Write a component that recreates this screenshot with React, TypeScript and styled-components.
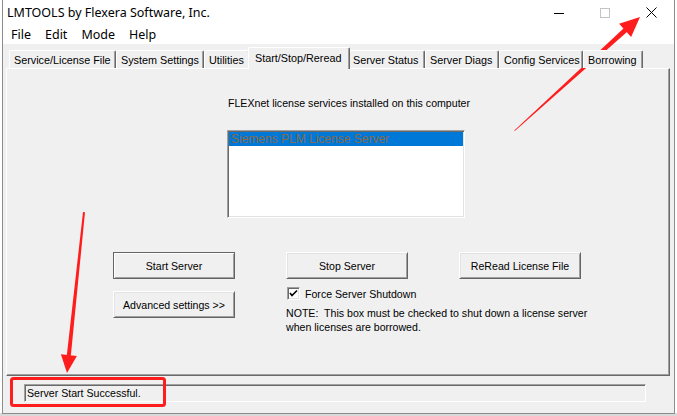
import React from 'react';
import styled, { createGlobalStyle } from 'styled-components';

const GlobalStyle = createGlobalStyle`
  html, body {
    margin: 0;
    padding: 0;
    width: 677px;
    height: 416px;
    overflow: hidden;
    background: #ffffff;
  }
`;

const UI_FONT = `'Liberation Sans', Arial, sans-serif`;
const TITLE_FONT = `'Noto Sans', 'Liberation Sans', sans-serif`;

const Desktop = styled.div`
  width: 677px;
  height: 416px;
  display: flex;
  align-items: flex-start;
  background: linear-gradient(to bottom, #ffffff 0, #ffffff 413px, #d9d9d9 413px);
  position: relative;
`;

const Window = styled.div`
  box-sizing: border-box;
  margin-left: 2px;
  width: 673px;
  height: 414px;
  border: 1px solid #8c8c8c;
  border-top: none;
  display: flex;
  flex-direction: column;
  background: #f0f0f0;
`;

const TitleBar = styled.div`
  height: 22px;
  display: flex;
  align-items: center;
  background: #ffffff;
  padding-top: 3px;
  box-sizing: border-box;
`;

const Title = styled.div`
  flex: 1;
  padding-left: 4px;
  font-family: ${TITLE_FONT};
  font-size: 12.5px;
  color: #000;
`;

const CaptionButton = styled.div`
  width: 46px;
  height: 19px;
  display: flex;
  align-items: center;
  justify-content: center;
`;

const MenuBar = styled.div`
  height: 22px;
  box-sizing: border-box;
  display: flex;
  align-items: center;
  padding: 3px 0 0 2px;
  background: #ffffff;
`;

const MenuItem = styled.div`
  padding: 0 6px;
  font-family: ${TITLE_FONT};
  font-size: 12.5px;
  color: #000;
  margin-right: 2px;
`;

const Client = styled.div`
  flex: 1;
  display: flex;
  flex-direction: column;
  padding: 3px 3px 0 3px;
`;

const TabStrip = styled.div`
  height: 21px;
  display: flex;
  align-items: flex-end;
  padding-left: 3px;
  position: relative;
  z-index: 1;
`;

const Tab = styled.div<{ $w: number; $active?: boolean }>`
  box-sizing: border-box;
  width: ${(p) => p.$w + (p.$active ? 4 : 0)}px;
  height: ${(p) => (p.$active ? 22 : 18)}px;
  margin: ${(p) => (p.$active ? '0 -2px -1px -2px' : '0')};
  position: relative;
  z-index: ${(p) => (p.$active ? 2 : 1)};
  background: #f0f0f0;
  border-top: 1px solid #ffffff;
  border-left: 1px solid #ffffff;
  border-right: 1px solid #696969;
  box-shadow: inset -1px 0 0 #a0a0a0;
  border-top-left-radius: 2px;
  border-top-right-radius: 2px;
  font-family: ${UI_FONT};
  font-size: 10.8px;
  color: #000;
  white-space: nowrap;
  overflow: hidden;
  padding: ${(p) => (p.$active ? '2px 0 0 6px' : '1px 0 0 4px')};
  line-height: 16px;
`;

const Panel = styled.div`
  box-sizing: border-box;
  height: 308px;
  margin-right: 1px;
  border-top: 1px solid #ffffff;
  border-left: 1px solid #ffffff;
  border-right: 1px solid #696969;
  border-bottom: 1px solid #696969;
  box-shadow: inset -1px -1px 0 #a0a0a0;
  display: flex;
  flex-direction: column;
  font-family: ${UI_FONT};
  font-size: 10.6px;
  color: #000;
`;

const ServicesBlock = styled.div`
  margin: 28px 0 0 220px;
  display: flex;
  flex-direction: column;
`;

const Label = styled.div`
  padding-left: 1px;
  line-height: 13px;
  height: 13px;
  margin-bottom: 20px;
`;

const ListBox = styled.div`
  box-sizing: border-box;
  width: 238px;
  height: 88px;
  background: #ffffff;
  border-top: 1px solid #a0a0a0;
  border-left: 1px solid #a0a0a0;
  border-right: 1px solid #ffffff;
  border-bottom: 1px solid #ffffff;
  box-shadow: inset 1px 1px 0 #696969, inset -1px -1px 0 #e3e3e3;
  padding: 1px 1px 0 1px;
`;

const ListItem = styled.div<{ $selected?: boolean }>`
  height: 14px;
  line-height: 14px;
  padding-left: 2px;
  background: ${(p) => (p.$selected ? '#0078d7' : 'transparent')};
  color: ${(p) => (p.$selected ? '#8a6a48' : '#000')};
  font-size: 12px;
`;

const Controls = styled.div`
  margin: 34px 0 0 106px;
  display: grid;
  grid-template-columns: 122px 122px 122px;
  column-gap: 51px;
  row-gap: 8px;
  align-items: start;
`;

const Button = styled.div<{ $default?: boolean }>`
  box-sizing: border-box;
  height: 27px;
  display: flex;
  align-items: center;
  justify-content: center;
  background: #f0f0f0;
  border-top: 1px solid ${(p) => (p.$default ? '#646464' : '#ffffff')};
  border-left: 1px solid ${(p) => (p.$default ? '#646464' : '#ffffff')};
  border-right: 1px solid #646464;
  border-bottom: 1px solid #646464;
  box-shadow: ${(p) =>
    p.$default
      ? 'inset 1px 1px 0 #ffffff, inset -1px -1px 0 #a0a0a0'
      : 'inset 1px 1px 0 #e3e3e3, inset -1px -1px 0 #a0a0a0'};
  white-space: nowrap;
`;

const AdvancedButton = styled(Button)`
  margin-top: 4px;
`;

const ShutdownCell = styled.div`
  grid-column: 2 / span 2;
  display: flex;
  flex-direction: column;
`;

const CheckRow = styled.label`
  display: flex;
  align-items: center;
  gap: 5px;
  height: 13px;
  padding-left: 1px;
`;

const CheckBox = styled.span`
  box-sizing: border-box;
  width: 13px;
  height: 13px;
  background: #ffffff;
  border-top: 1px solid #a0a0a0;
  border-left: 1px solid #a0a0a0;
  border-right: 1px solid #ffffff;
  border-bottom: 1px solid #ffffff;
  box-shadow: inset 1px 1px 0 #696969, inset -1px -1px 0 #e3e3e3;
  display: flex;
  align-items: center;
  justify-content: center;
`;

const Note = styled.div`
  margin-top: 6px;
  line-height: 14px;
  white-space: nowrap;
`;

const StatusBox = styled.div`
  box-sizing: border-box;
  margin: 8px 0 0 18px;
  width: 622px;
  height: 18px;
  border-top: 1px solid #a0a0a0;
  border-left: 1px solid #a0a0a0;
  border-right: 1px solid #ffffff;
  border-bottom: 1px solid #ffffff;
  box-shadow: inset 1px 1px 0 #696969;
  padding-left: 2px;
  font-family: ${UI_FONT};
  font-size: 10.6px;
  line-height: 16px;
  color: #000;
`;

const Overlay = styled.svg`
  position: absolute;
  left: 0;
  top: 0;
  pointer-events: none;
`;

const tabs = [
  { label: 'Service/License File', w: 107 },
  { label: 'System Settings', w: 88 },
  { label: 'Utilities', w: 46 },
  { label: 'Start/Stop/Reread', w: 98, active: true },
  { label: 'Server Status', w: 77 },
  { label: 'Server Diags', w: 74 },
  { label: 'Config Services', w: 84 },
  { label: 'Borrowing', w: 60 },
];

const App: React.FC = () => {
  return (
    <Desktop>
      <GlobalStyle />
      <Window>
        <TitleBar>
          <Title>LMTOOLS by Flexera Software, Inc.</Title>
          <CaptionButton>
            <svg width="10" height="10" viewBox="0 0 10 10">
              <line x1="0" y1="5.5" x2="10" y2="5.5" stroke="#000" strokeWidth="1" />
            </svg>
          </CaptionButton>
          <CaptionButton>
            <svg width="10" height="10" viewBox="0 0 10 10">
              <rect x="0.5" y="0.5" width="9" height="9" fill="none" stroke="#c4c4c4" strokeWidth="1" />
            </svg>
          </CaptionButton>
          <CaptionButton>
            <svg width="11" height="11" viewBox="0 0 11 11">
              <path d="M0.5 0.5 L10.5 10.5 M10.5 0.5 L0.5 10.5" stroke="#000" strokeWidth="1" />
            </svg>
          </CaptionButton>
        </TitleBar>
        <MenuBar>
          <MenuItem>File</MenuItem>
          <MenuItem>Edit</MenuItem>
          <MenuItem>Mode</MenuItem>
          <MenuItem>Help</MenuItem>
        </MenuBar>
        <Client>
          <TabStrip>
            {tabs.map((t) => (
              <Tab key={t.label} $w={t.w} $active={t.active}>
                {t.label}
              </Tab>
            ))}
          </TabStrip>
          <Panel>
            <ServicesBlock>
              <Label>FLEXnet license services installed on this computer</Label>
              <ListBox>
                <ListItem $selected>Siemens PLM License Server</ListItem>
              </ListBox>
            </ServicesBlock>
            <Controls>
              <Button $default>Start Server</Button>
              <Button>Stop Server</Button>
              <Button>ReRead License File</Button>
              <AdvancedButton>Advanced settings &gt;&gt;</AdvancedButton>
              <ShutdownCell>
                <CheckRow>
                  <CheckBox>
                    <svg width="9" height="9" viewBox="0 0 9 9">
                      <path d="M1 4 L3 6.5 L8 1.5" fill="none" stroke="#000" strokeWidth="1.6" />
                    </svg>
                  </CheckBox>
                  Force Server Shutdown
                </CheckRow>
                <Note>
                  NOTE:&nbsp; This box must be checked to shut down a license server
                  <br />
                  when licenses are borrowed.
                </Note>
              </ShutdownCell>
            </Controls>
          </Panel>
          <StatusBox>Server Start Successful.</StatusBox>
        </Client>
      </Window>
      <Overlay width="677" height="416" viewBox="0 0 677 416">
        <polygon
          points="514.3,130.4 514.8,130.9 629.8,29.5 626.4,25.8"
          fill="#ff1c1c"
        />
        <polygon points="640,17 631.1,37.1 619.1,23.7" fill="#ff1c1c" />
        <polygon points="83,212 85,212.2 70.8,356 66.8,355.6" fill="#ff1c1c" />
        <polygon points="67,373 76.9,355.9 60.9,354.3" fill="#ff1c1c" />
        <rect
          x="11.5"
          y="378.5"
          width="153"
          height="27"
          rx="2"
          fill="none"
          stroke="#ff1c1c"
          strokeWidth="3"
        />
      </Overlay>
    </Desktop>
  );
};

export default App;
